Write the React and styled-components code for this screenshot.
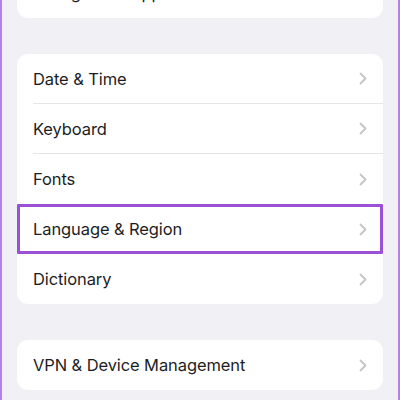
import React from "react";
import styled, { createGlobalStyle } from "styled-components";

const GlobalStyle = createGlobalStyle`
  html, body {
    margin: 0;
    padding: 0;
    background: #f0f0f5;
  }
  * { box-sizing: border-box; }
`;

const Screen = styled.div`
  width: 400px;
  height: 400px;
  overflow: hidden;
  background: #f0f0f5;
  border-left: 2px solid #b47fe6;
  border-right: 2px solid #b47fe6;
  padding: 0 15px;
  display: flex;
  flex-direction: column;
  gap: 36px;
  font-family: Inter, "Liberation Sans", sans-serif;
`;

const Card = styled.div`
  background: #ffffff;
  border-radius: 11px;
  overflow: hidden;
  margin-top: ${props => props.marginTop ? props.marginTop : '0'};
  flex: none;
`;

const Row = styled.div`
  height: ${props => props.height ? props.height : '50px'};
  display: flex;
  padding-left: 16px;
  box-shadow: ${props => props.highlighted ? 'inset 0 0 0 3px #9b50d8' : 'none'};
  border-radius: ${props => props.highlighted ? '1px' : '0'};
`;

const RowInner = styled.div`
  flex: 1;
  display: flex;
  align-items: center;
  justify-content: space-between;
  padding-right: 16px;
  border-bottom: ${props => props.last ? 'none' : '1px solid #e6e6ea'};
`;

const Label = styled.span`
  font-size: 16.5px;
  color: #1d1d1f;
  letter-spacing: -0.1px;
`;

const Chevron = () => (
  <svg width="8" height="13" viewBox="0 0 8 13">
    <path d="M1.5 1.5 L6.5 6.5 L1.5 11.5" fill="none" stroke="#c4c4c8" strokeWidth="1.8" strokeLinecap="round" strokeLinejoin="round" />
  </svg>
);

function SettingsRow({ label, last, highlighted, chevron = true }) {
  return (
    <Row highlighted={highlighted}>
      <RowInner last={last || highlighted}>
        <Label>{label}</Label>
        {chevron && <Chevron />}
      </RowInner>
    </Row>
  );
}

const general = ["Date & Time", "Keyboard", "Fonts", "Language & Region", "Dictionary"];

export default function App() {
  return (
    <>
      <GlobalStyle />
      <Screen>
        <Card marginTop="-32px">
          <SettingsRow label="Background App Refresh" last />
        </Card>
        <Card>
          {general.map((g, i) => (
            <SettingsRow
              key={g}
              label={g}
              highlighted={g === "Language & Region"}
              last={i === general.length - 1 || general[i + 1] === "Language & Region"}
            />
          ))}
        </Card>
        <Card>
          <SettingsRow label="VPN & Device Management" last />
        </Card>
      </Screen>
    </>
  );
}
